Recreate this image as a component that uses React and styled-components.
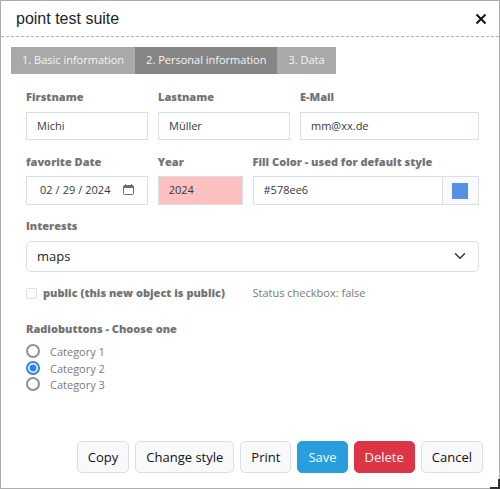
import React, { useState } from "react";
import styled, { createGlobalStyle } from "styled-components";

const GlobalStyle = createGlobalStyle`
  *, *::before, *::after { box-sizing: border-box; }
  body { margin: 0; background: #fff; font-family: "Open Sans", sans-serif; font-size: 11px; color: #737373; }
  button, input, select { font: inherit; margin: 0; }
`;

const Dialog = styled.section`
  position: relative;
  display: flex;
  flex-direction: column;
  min-height: 100vh;
  border: 1px solid #adadad;
  background: #fff;
`;

const Header = styled.header`
  display: flex;
  align-items: center;
  justify-content: space-between;
  height: 36px;
  padding: 0 12px 0 15px;
  border-bottom: 1px dashed #b5b5b5;
`;

const Title = styled.h1`
  margin: 0;
  font: 400 16px/20px "Liberation Sans", Arial, sans-serif;
  color: #212529;
`;

const CloseButton = styled.button`
  display: flex;
  padding: 0;
  border: 0;
  background: none;
  color: #111;
`;

const Tabs = styled.nav`
  display: flex;
  padding: 10px 10px 0;
`;

const Tab = styled.button`
  height: 27px;
  padding: 0 11px 2px;
  border: 0;
  color: #f5f5f5;
  line-height: 16px;
  white-space: nowrap;
  background: ${(p) => (p.$active ? "#868686" : "#a9a9a9")};
`;

const Form = styled.form`
  display: flex;
  flex: 1;
  flex-direction: column;
`;

const Fields = styled.div`
  padding: 15px 20px 15px 25px;
`;

const Row = styled.div`
  display: grid;
  grid-template-columns: ${(p) => p.$columns || "minmax(0, 1fr)"};
  column-gap: 10px;
  margin-bottom: ${(p) => p.$after || 13}px;
`;

const Field = styled.div`
  display: flex;
  flex-direction: column;
  gap: ${(p) => p.$gap || 7}px;
  min-width: 0;
`;

const Label = styled.label`
  font-weight: 800;
  line-height: 16px;
  white-space: nowrap;
`;

const TextInput = styled.input`
  width: 100%;
  min-width: 0;
  height: ${(p) => p.$height || 28}px;
  padding: 0 10px 2px;
  border: 1px solid #dadfe5;
  border-radius: 0;
  outline: 0;
  color: #343a40;
  background: ${(p) => (p.$invalid ? "#ffc0c0" : "#fff")};
`;

const DateBox = styled.div`
  position: relative;
`;

const DateInput = styled(TextInput)`
  display: block;
  padding: 0 12px 2px;
  &::-webkit-datetime-edit-text { padding: 0 2px; }
  &::-webkit-calendar-picker-indicator { opacity: 0; }
`;

const CalendarIcon = styled.svg`
  position: absolute;
  top: 8px;
  right: 14px;
  pointer-events: none;
`;

const ColorGroup = styled.div`
  display: flex;
`;

const ColorAddon = styled.span`
  display: flex;
  flex: 0 0 36px;
  align-items: center;
  padding-left: 9px;
  border: 1px solid #dadfe5;
  border-left: 0;
  background: #f8fafc;
`;

const Swatch = styled.input`
  appearance: none;
  width: 16px;
  height: 16px;
  padding: 0;
  border: 0;
  background: none;
  &::-webkit-color-swatch-wrapper { padding: 0; }
  &::-webkit-color-swatch { border: 0; border-radius: 0; }
`;

const SelectBox = styled.div`
  position: relative;
`;

const Select = styled.select`
  appearance: none;
  display: block;
  width: 100%;
  height: 31px;
  padding: 0 34px 2px 10px;
  border: 1px solid #dadfe5;
  border-radius: 5px;
  color: #212529;
  background: #fff;
  font-size: 13px;
`;

const Chevron = styled.svg`
  position: absolute;
  top: 9px;
  right: 13px;
  pointer-events: none;
`;

const CheckRow = styled.div`
  display: flex;
  align-items: center;
  gap: 6px;
`;

const Checkbox = styled.input`
  appearance: none;
  flex: none;
  width: 11px;
  height: 11px;
  border: 1px solid #dadfe5;
  border-radius: 2px;
  background: #fff;
  &:checked { background: #2f80ed; }
`;

const Status = styled.output`
  color: #7b7b7b;
  line-height: 16px;
`;

const RadioGroup = styled.fieldset`
  margin: 0;
  padding: 0;
  border: 0;
`;

const Legend = styled.legend`
  padding: 0 0 7px;
  font-weight: 800;
  line-height: 16px;
`;

const RadioLabel = styled.label`
  display: flex;
  align-items: flex-start;
  gap: 10px;
  height: 17px;
  color: #7b7b7b;
  line-height: 15px;
  &:last-child { height: 16px; margin-top: -1px; }
`;

const Radio = styled.input`
  appearance: none;
  flex: none;
  width: 14px;
  height: 14px;
  border: 2px solid #8f8f9d;
  border-radius: 50%;
  background: #fff;
  &:checked {
    border-color: #2f80ed;
    background: radial-gradient(circle, #2f80ed 2px, #2f80ed 3px, #fff 4px);
  }
`;

const Actions = styled.footer`
  display: flex;
  justify-content: flex-end;
  gap: 6px;
  margin-top: auto;
  padding: 0 16px 15px;
`;

const tones = {
  light: ["#f8f9fa", "#dadfe5", "#111"],
  primary: ["#289edd", "#289edd", "#f4fbff"],
  danger: ["#dc3545", "#dc3545", "#fff4f5"],
};

const Button = styled.button`
  height: 32px;
  padding: 0 10px;
  border: 1px solid ${(p) => tones[p.$tone][1]};
  border-radius: 5px;
  color: ${(p) => tones[p.$tone][2]};
  background: ${(p) => tones[p.$tone][0]};
  font-size: 13px;
  white-space: nowrap;
`;

const ResizeHandle = styled.span`
  position: absolute;
  right: -1px;
  bottom: -1px;
  width: 10px;
  height: 10px;
  border-right: 2px solid #333;
  border-bottom: 2px solid #333;
  cursor: nwse-resize;
`;

const tabNames = ["1. Basic information", "2. Personal information", "3. Data"];
const categories = ["Category 1", "Category 2", "Category 3"];
const actions = [
  ["Copy", "light"],
  ["Change style", "light"],
  ["Print", "light"],
  ["Save", "primary"],
  ["Delete", "danger"],
  ["Cancel", "light"],
];

export default function App() {
  const [tab, setTab] = useState(1);
  const [isPublic, setIsPublic] = useState(false);
  const [color, setColor] = useState("#578ee6");

  return (
    <>
      <GlobalStyle />
      <Dialog role="dialog" aria-labelledby="title">
        <Header>
          <Title id="title">point test suite</Title>
          <CloseButton type="button" aria-label="Close">
            <svg width="12" height="12" viewBox="0 0 12 12" fill="none" stroke="currentColor" strokeWidth="2">
              <path d="M1.5 1.5l9 9M10.5 1.5l-9 9" />
            </svg>
          </CloseButton>
        </Header>
        <Tabs>
          {tabNames.map((name, i) => (
            <Tab key={name} type="button" $active={tab === i} onClick={() => setTab(i)}>{name}</Tab>
          ))}
        </Tabs>
        <Form onSubmit={(e) => e.preventDefault()}>
          <Fields>
            <Row $columns="122fr 132fr 179fr" $after={14}>
              <Field>
                <Label htmlFor="first">Firstname</Label>
                <TextInput id="first" defaultValue="Michi" />
              </Field>
              <Field>
                <Label htmlFor="last">Lastname</Label>
                <TextInput id="last" defaultValue="Müller" />
              </Field>
              <Field>
                <Label htmlFor="mail">E-Mail</Label>
                <TextInput id="mail" type="email" defaultValue="mm@xx.de" />
              </Field>
            </Row>
            <Row $columns="122fr 85fr 227fr">
              <Field $gap={6}>
                <Label htmlFor="date">favorite Date</Label>
                <DateBox>
                  <DateInput id="date" type="date" $height={29} defaultValue="2024-02-29" />
                  <CalendarIcon width="11" height="12" viewBox="0 0 11 12" fill="none" stroke="#6b6b74">
                    <rect x="0.5" y="1.5" width="10" height="9" rx="1" />
                    <path d="M0.5 2.5h10M0.5 3.5h10M2.5 0v2M8.5 0v2" />
                  </CalendarIcon>
                </DateBox>
              </Field>
              <Field $gap={6}>
                <Label htmlFor="year">Year</Label>
                <TextInput id="year" $height={29} $invalid defaultValue="2024" />
              </Field>
              <Field $gap={6}>
                <Label htmlFor="color">Fill Color - used for default style</Label>
                <ColorGroup>
                  <TextInput id="color" $height={29} value={color} onChange={(e) => setColor(e.target.value)} />
                  <ColorAddon>
                    <Swatch type="color" aria-label="Pick fill color" value={color} onChange={(e) => setColor(e.target.value)} />
                  </ColorAddon>
                </ColorGroup>
              </Field>
            </Row>
            <Row>
              <Field>
                <Label htmlFor="interests">Interests</Label>
                <SelectBox>
                  <Select id="interests" defaultValue="maps">
                    <option>maps</option>
                  </Select>
                  <Chevron width="12" height="12" viewBox="0 0 16 16" fill="none" stroke="#343a40" strokeWidth="2" strokeLinecap="round" strokeLinejoin="round">
                    <path d="M2 5l6 6 6-6" />
                  </Chevron>
                </SelectBox>
              </Field>
            </Row>
            <Row $columns="217fr 227fr" $after={20}>
              <CheckRow>
                <Checkbox id="public" type="checkbox" checked={isPublic} onChange={(e) => setIsPublic(e.target.checked)} />
                <Label htmlFor="public">public (this new object is public)</Label>
              </CheckRow>
              <Status htmlFor="public">Status checkbox: {String(isPublic)}</Status>
            </Row>
            <RadioGroup>
              <Legend>Radiobuttons - Choose one</Legend>
              {categories.map((name, i) => (
                <RadioLabel key={name}>
                  <Radio type="radio" name="category" defaultChecked={i === 1} />
                  {name}
                </RadioLabel>
              ))}
            </RadioGroup>
          </Fields>
          <Actions>
            {actions.map(([name, tone]) => (
              <Button key={name} type="button" $tone={tone}>{name}</Button>
            ))}
          </Actions>
        </Form>
        <ResizeHandle />
      </Dialog>
    </>
  );
}
